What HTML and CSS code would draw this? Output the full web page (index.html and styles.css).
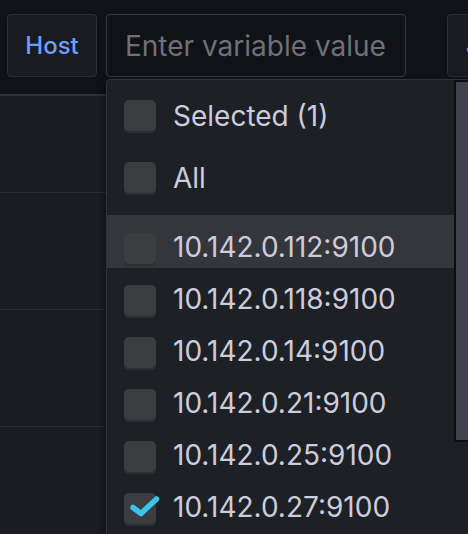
FILE: index.html
```html
<!DOCTYPE html>
<html>
<head>
<meta charset="utf-8">
<link rel="stylesheet" href="styles.css">
</head>
<body>
<div class="toolbar">
  <div class="label">Host</div>
  <div class="input"><span class="placeholder">Enter variable value</span></div>
  <div class="label label-job">Job</div>
</div>
<div class="panel">
  <div class="prow prow-first"></div>
  <div class="prow"></div>
  <div class="prow"></div>
  <div class="prow prow-last"></div>
</div>
<div class="dropdown">
  <div class="list">
    <div class="opt opt-head"><span class="cb"></span><span class="txt">Selected (1)</span></div>
    <div class="opt opt-head"><span class="cb"></span><span class="txt">All</span></div>
    <div class="sep"></div>
    <div class="opt opt-hover"><span class="cb"></span><span class="txt">10.142.0.112:9100</span></div>
    <div class="opt"><span class="cb"></span><span class="txt">10.142.0.118:9100</span></div>
    <div class="opt"><span class="cb"></span><span class="txt">10.142.0.14:9100</span></div>
    <div class="opt"><span class="cb"></span><span class="txt">10.142.0.21:9100</span></div>
    <div class="opt"><span class="cb"></span><span class="txt">10.142.0.25:9100</span></div>
    <div class="opt"><span class="cb cb-checked"><svg class="check" width="40" height="28" viewBox="0 0 40 28"><polyline points="9,14.5 17,20.5 32.5,6" fill="none" stroke="#3ac4ea" stroke-width="5.5" stroke-linecap="round" stroke-linejoin="round"/></svg></span><span class="txt">10.142.0.27:9100</span></div>
  </div>
  <div class="scroll"><div class="thumb"></div></div>
</div>
</body>
</html>
```
FILE: styles.css
```css
html, body {
  margin: 0;
  padding: 0;
}
body {
  width: 468px;
  height: 534px;
  overflow: hidden;
  background: #111217;
  font-family: Inter, "Noto Sans", sans-serif;
  position: relative;
}
.toolbar {
  display: flex;
  padding: 14px 0 0 7px;
  height: 63px;
}
.label {
  box-sizing: border-box;
  width: 90px;
  height: 63px;
  flex: none;
  display: flex;
  align-items: center;
  justify-content: center;
  background: #181b1f;
  border: 1px solid #2b2e34;
  border-radius: 4px;
  color: #6e9fff;
  font-size: 24px;
  font-weight: 500;
}
.label-job {
  justify-content: flex-start;
  padding-left: 18px;
  width: 120px;
}
.input {
  box-sizing: border-box;
  width: 300px;
  height: 63px;
  margin: 0 41px 0 9px;
  flex: none;
  display: flex;
  align-items: center;
  padding-left: 18px;
  background: #111217;
  border: 1px solid #36383e;
  border-radius: 4px;
}
.placeholder {
  color: #6f7078;
  font-size: 28px;
}
.panel {
  margin-top: 17px;
  border-top: 2px solid #2d3035;
  background: #1a1d21;
}
.prow {
  height: 116px;
  border-bottom: 1px solid #2a2d32;
}
.prow-first {
  height: 96px;
}
.prow-last {
  border-bottom: none;
}
.dropdown {
  position: absolute;
  left: 106px;
  top: 79px;
  width: 400px;
  height: 520px;
  display: flex;
  background: #1d2025;
  border: 1px solid #2e3136;
  border-radius: 4px;
  box-shadow: -2px 4px 8px rgba(0, 0, 0, 0.35);
  overflow: hidden;
}
.list {
  width: 347px;
  flex: none;
  padding-top: 5px;
}
.opt {
  height: 52px;
  display: flex;
  align-items: flex-start;
}
.opt-head {
  height: 62px;
}
.opt-hover {
  background: #34363b;
}
.cb {
  position: relative;
  box-sizing: border-box;
  width: 32px;
  height: 33px;
  margin: 17px 0 0 17px;
  flex: none;
  background: #3b3c40;
  border-radius: 5px;
  box-shadow: inset 0 -2px 0 #2c2e33;
}
.opt-head .cb {
  margin-top: 15px;
}
.check {
  position: absolute;
  left: 0;
  top: 0;
}
.txt {
  margin: 15px 0 0 17px;
  line-height: 32px;
  font-size: 28px;
  color: #ccccdc;
  white-space: nowrap;
}
.sep {
  height: 1px;
  margin-top: 6px;
  background: #33363b;
}
.scroll {
  flex: none;
  width: 40px;
}
.thumb {
  box-sizing: border-box;
  width: 24px;
  height: 362px;
  background: #3f414c;
  border: 2px solid #0c0d10;
  border-radius: 2px;
}
```
